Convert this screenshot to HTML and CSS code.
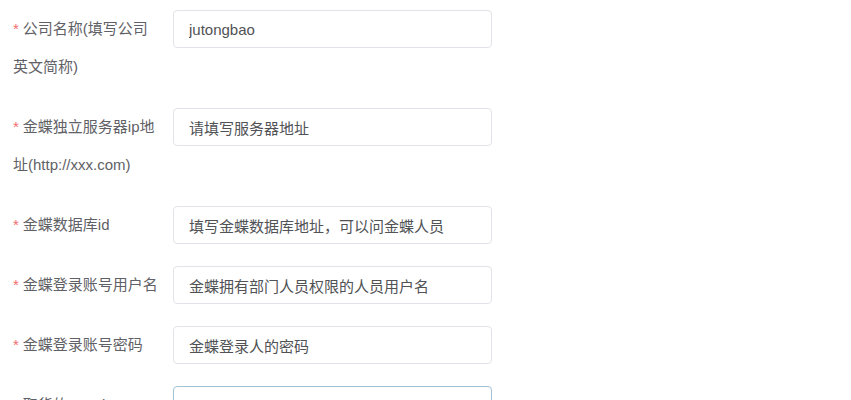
FILE: index.html
```html
<!DOCTYPE html>
<html lang="zh-CN">
<head>
    <meta charset="UTF-8">
    <meta name="viewport" content="width=device-width, initial-scale=1.0">
    <title>金蝶配置</title>
    <link rel="stylesheet" href="styles.css">
</head>
<body>
    <form class="config-form">
        <div class="form-item">
            <label class="form-label is-required">公司名称(填写公司英文简称)</label>
            <div class="form-content">
                <input class="form-input" type="text" value="jutongbao">
            </div>
        </div>
        <div class="form-item">
            <label class="form-label is-required">金蝶独立服务器ip地址(http://xxx.com)</label>
            <div class="form-content">
                <input class="form-input" type="text" value="请填写服务器地址">
            </div>
        </div>
        <div class="form-item">
            <label class="form-label is-required">金蝶数据库id</label>
            <div class="form-content">
                <input class="form-input" type="text" value="填写金蝶数据库地址，可以问金蝶人员">
            </div>
        </div>
        <div class="form-item">
            <label class="form-label is-required">金蝶登录账号用户名</label>
            <div class="form-content">
                <input class="form-input" type="text" value="金蝶拥有部门人员权限的人员用户名">
            </div>
        </div>
        <div class="form-item">
            <label class="form-label is-required">金蝶登录账号密码</label>
            <div class="form-content">
                <input class="form-input" type="text" value="金蝶登录人的密码">
            </div>
        </div>
        <div class="form-item">
            <label class="form-label is-required">取货的appId</label>
            <div class="form-content">
                <input class="form-input is-focus" type="text" value="dlt06a988bf02f99">
            </div>
        </div>
    </form>
</body>
</html>
```

FILE: styles.css
```css
body {
    margin: 0;
    background-color: #ffffff;
    font-family: "Liberation Sans", "Noto Sans CJK SC", sans-serif;
    font-size: 15px;
    color: #5f6166;
}
.config-form {
    padding: 10px 13px 0;
}
.form-item {
    display: flex;
    align-items: flex-start;
    margin-bottom: 22px;
}
.form-label {
    width: 147px;
    padding-right: 13px;
    line-height: 38px;
    flex-shrink: 0;
}
.form-label.is-required::before {
    content: "*";
    color: #f56c6c;
    margin-right: 4px;
}
.form-content {
    width: 319px;
}
.form-input {
    display: block;
    box-sizing: border-box;
    width: 100%;
    height: 38px;
    padding: 0 15px;
    border: 1px solid #e1e3e8;
    border-radius: 4px;
    background-color: #ffffff;
    font-family: "Liberation Sans", "Noto Sans CJK SC", sans-serif;
    font-size: 15px;
    color: #505255;
    outline: none;
}
.form-input.is-focus {
    border-color: #a3c2d6;
}
```
